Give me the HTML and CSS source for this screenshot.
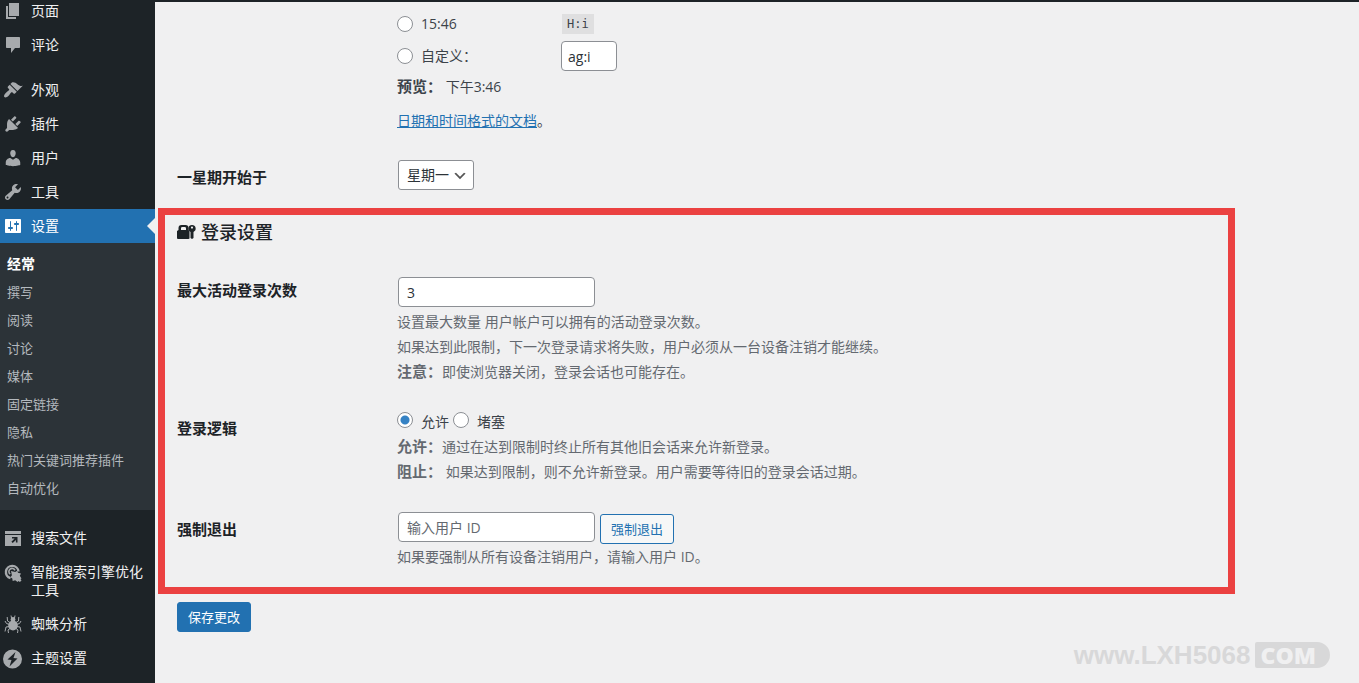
FILE: index.html
```html
<!DOCTYPE html>
<html lang="zh-CN">
<head>
<meta charset="utf-8">
<meta name="viewport" content="width=device-width, initial-scale=1">
<title>常规设置</title>
<link rel="stylesheet" href="styles.css">
</head>
<body>
<div class="layout">
  <nav class="sidebar">
    <ul class="menu">
      <li><a class="item item-first" href="#"><svg class="icon" viewBox="0 0 20 20"><path d="M6 15V2h10v13H6zm-1 1h8v2H3V5h2v11z"/></svg><span>页面</span></a></li>
      <li><a class="item" href="#"><svg class="icon" viewBox="0 0 20 20"><path d="M4 2h12c.6 0 1 .4 1 1v9c0 .6-.4 1-1 1h-4l-4 5v-5H4c-.6 0-1-.4-1-1V3c0-.6.4-1 1-1z"/></svg><span>评论</span></a></li>
    </ul>
    <ul class="menu">
      <li><a class="item" href="#"><svg class="icon" viewBox="0 0 20 20"><path d="M14.48 11.06L7.41 3.99l1.5-1.5c.5-.56 2.3-.47 3.51.32 1.21.8 1.43 1.28 2.91 2.1 1.18.64 2.45 1.26 4.45.85zm-.71.71L6.7 4.7 4.93 6.47c-.39.39-.39 1.02 0 1.41l1.06 1.06c.39.39.39 1.03 0 1.42-.6.6-1.43 1.11-2.21 1.69-.35.26-.7.53-1.01.84C1.43 14.23.4 16.08 1.4 17.07c.99 1 2.84-.03 4.18-1.36.31-.31.58-.66.85-1.02.57-.78 1.08-1.61 1.69-2.21.39-.39 1.02-.39 1.41 0l1.06 1.06c.39.39 1.02.39 1.41 0z"/></svg><span>外观</span></a></li>
      <li><a class="item" href="#"><svg class="icon" viewBox="0 0 20 20"><path d="M13.11 4.36L9.87 7.6 8 5.73l3.24-3.24c.35-.34 1.05-.2 1.56.32.52.51.66 1.21.31 1.55zm-8 1.77l.91-1.12 9.01 9.01-1.19.84c-.71.71-2.63 1.16-3.82 1.16H6.14L4.9 17.26c-.59.59-1.54.59-2.12 0-.59-.58-.59-1.53 0-2.12l1.24-1.24v-3.88c0-1.13.4-3.19 1.09-3.89zm7.26 3.97l3.24-3.24c.34-.35 1.04-.21 1.55.31.52.51.66 1.21.31 1.55l-3.24 3.25z"/></svg><span>插件</span></a></li>
      <li><a class="item" href="#"><svg class="icon" viewBox="0 0 20 20"><path d="M10 9.25c-2.27 0-2.73-3.44-2.73-3.44C7 4.02 7.82 2 9.97 2c2.16 0 2.98 2.02 2.71 3.81 0 0-.41 3.44-2.68 3.44zm0 2.57L12.72 10c2.39 0 4.52 2.33 4.52 4.53v2.49s-3.65 1.13-7.24 1.13c-3.65 0-7.24-1.13-7.24-1.13v-2.49c0-2.25 1.94-4.48 4.47-4.48z"/></svg><span>用户</span></a></li>
      <li><a class="item" href="#"><svg class="icon" viewBox="0 0 20 20"><path d="M16.68 9.77c-1.34 1.34-3.3 1.67-4.95.99l-5.41 6.52c-.99.99-2.59.99-3.58 0s-.99-2.59 0-3.57l6.52-5.42c-.68-1.65-.35-3.61.99-4.95 1.28-1.28 3.12-1.62 4.72-1.06l-2.89 2.89 2.82 2.82 2.86-2.87c.53 1.58.18 3.39-1.08 4.65zM3.81 16.21c.4.39 1.04.39 1.43 0 .4-.4.4-1.04 0-1.43-.39-.4-1.03-.4-1.43 0-.39.39-.39 1.03 0 1.43z"/></svg><span>工具</span></a></li>
      <li><a class="item item-current" href="#"><svg class="icon" viewBox="0 0 20 20"><path d="M18 16V4c0-.55-.45-1-1-1H3c-.55 0-1 .45-1 1v12c0 .55.45 1 1 1h14c.55 0 1-.45 1-1zM8 11h1c.55 0 1 .45 1 1s-.45 1-1 1H8v1.5c0 .28-.22.5-.5.5s-.5-.22-.5-.5V13H6c-.55 0-1-.45-1-1s.45-1 1-1h1V5.5c0-.28.22-.5.5-.5s.5.22.5.5V11zm5-2h-1c-.55 0-1-.45-1-1s.45-1 1-1h1V5.5c0-.28.22-.5.5-.5s.5.22.5.5V7h1c.55 0 1 .45 1 1s-.45 1-1 1h-1v5.5c0 .28-.22.5-.5.5s-.5-.22-.5-.5V9z"/></svg><span>设置</span></a>
        <ul class="submenu">
          <li><a class="sub sub-current" href="#">经常</a></li>
          <li><a class="sub" href="#">撰写</a></li>
          <li><a class="sub" href="#">阅读</a></li>
          <li><a class="sub" href="#">讨论</a></li>
          <li><a class="sub" href="#">媒体</a></li>
          <li><a class="sub" href="#">固定链接</a></li>
          <li><a class="sub" href="#">隐私</a></li>
          <li><a class="sub" href="#">热门关键词推荐插件</a></li>
          <li><a class="sub" href="#">自动优化</a></li>
        </ul>
      </li>
    </ul>
    <ul class="menu">
      <li><a class="item" href="#"><svg class="icon" viewBox="0 0 20 20"><path fill-rule="evenodd" d="M2 3h16v3H2zM2 7h16v11H2zM9 9v1.600h2.600L8.400 13.800l1.300 1.300 3.200-3.200v2.600h1.600V9z"/></svg><span>搜索文件</span></a></li>
      <li><a class="item" href="#"><svg class="icon icon-low" viewBox="0 0 20 20"><path class="ring" d="M15.500 8.500A6.300 6.300 0 1 0 7.500 15.200"/><path class="ring ring-inner" d="M12 7.300A3.200 3.200 0 1 0 7.200 11.200"/><path d="M8 8l4.200 1 2-1.200.8 2 3 .7-1.200 2.300 1.700 2.700-1 .6 1 1.400-1.600 1.600-1.500-1.200-.8 1.100-2.400-1.700-2.500.7-.4-2.600-1.800-1.200 1.400-2z"/></svg><span>智能搜索引擎优化工具</span></a></li>
      <li><a class="item" href="#"><svg class="icon" viewBox="0 0 20 20"><ellipse cx="10" cy="11.500" rx="4.800" ry="5"/><circle cx="10" cy="5.500" r="2.400"/><path class="stroke" d="M8.500 4L8 1.500M11.500 4l.5-2.500M7 8.500L4.500 7 4.200 3M13 8.500L15.500 7l.3-4M6.500 10.500L3.500 9.500 2 7M13.500 10.500l3-1L18 7M6.500 12.500L3 13 2 17.500M13.500 12.500l3.500.500 1 4.500M7 14.500L5 16l.5 3M13 14.500l2 1.500-.5 3"/></svg><span>蜘蛛分析</span></a></li>
      <li><a class="item" href="#"><svg class="icon icon-low" viewBox="0 0 20 20"><path fill-rule="evenodd" d="M9.500.5a9.500 9.500 0 1 1 0 19 9.500 9.500 0 0 1 0-19zM12.500 3L4.500 10.500l4 .5L6.500 17.500 14.500 9.500l-4-.5z"/></svg><span>主题设置</span></a></li>
    </ul>
  </nav>

  <main class="content">
    <form>
      <div class="row row-time">
        <div class="label"></div>
        <div class="field">
          <div class="option">
            <label class="choice choice-wide"><input type="radio" name="time">15:46</label>
            <code>H:i</code>
          </div>
          <div class="option">
            <label class="choice choice-wide"><input type="radio" name="time">自定义：</label>
            <input class="text text-small" type="text" value="ag:i" aria-label="自定义时间格式">
          </div>
          <p class="preview"><strong>预览：</strong> 下午3:46</p>
          <p class="docs"><a href="#">日期和时间格式的文档</a>。</p>
        </div>
      </div>
      <div class="row row-week">
        <label class="label label-week" for="week">一星期开始于</label>
        <div class="field">
          <div class="select">
            <select id="week"><option>星期一</option></select>
            <svg viewBox="0 0 20 20"><path d="M5 6l5 5 5-5 2 1-7 7-7-7z"/></svg>
          </div>
        </div>
      </div>

      <section class="login">
        <h2><svg viewBox="0 0 20 20"><path fill-rule="evenodd" d="M0 9l1.500-1V6a3 3 0 0 1 3-3h4a3 3 0 0 1 3 3v2l1 1v7.500l-1 .5H1l-1-.5zM4 8h5V6.300A1.300 1.300 0 0 0 7.700 5H5.300A1.300 1.300 0 0 0 4 6.300z"/><path fill-rule="evenodd" d="M15 3a3.600 3.600 0 0 1 1.500 6.900V16L15 17l-1.500-1V9.900A3.600 3.600 0 0 1 15 3zM15 4.500a1.100 1.100 0 1 0 0 2.200 1.100 1.100 0 0 0 0-2.200z"/></svg>登录设置</h2>
        <div class="row">
          <label class="label label-max" for="max">最大活动登录次数</label>
          <div class="field">
            <input class="text" id="max" type="text" value="3">
            <p class="desc desc-max">设置最大数量 用户帐户可以拥有的活动登录次数。<br>如果达到此限制，下一次登录请求将失败，用户必须从一台设备注销才能继续。<br><strong>注意：</strong>即使浏览器关闭，登录会话也可能存在。</p>
          </div>
        </div>
        <div class="row row-logic">
          <div class="label label-logic">登录逻辑</div>
          <div class="field">
            <div class="choices">
              <label class="choice"><input type="radio" name="logic" checked><span>允许</span></label>
              <label class="choice"><input type="radio" name="logic"><span>堵塞</span></label>
            </div>
            <p class="desc"><strong>允许：</strong>通过在达到限制时终止所有其他旧会话来允许新登录。<br><strong>阻止：</strong> 如果达到限制，则不允许新登录。用户需要等待旧的登录会话过期。</p>
          </div>
        </div>
        <div class="row row-force">
          <label class="label label-force" for="uid">强制退出</label>
          <div class="field">
            <div class="inline">
              <input class="text" id="uid" type="text" placeholder="输入用户 ID">
              <button class="button" type="button">强制退出</button>
            </div>
            <p class="desc">如果要强制从所有设备注销用户，请输入用户 ID。</p>
          </div>
        </div>
      </section>
      <button class="button button-primary" type="submit">保存更改</button>
    </form>
  </main>
</div>
<div class="watermark"><span>www.LXH5068</span><span class="mark-com">COM</span></div>
</body>
</html>
```
FILE: styles.css
```css
* { box-sizing: border-box; }

body {
  margin: 0;
  height: 100vh;
  overflow: hidden;
  position: relative;
  background: #f0f0f1;
  color: #3c434a;
  font: 14px/20px "Open Sans", "Noto Sans CJK SC", sans-serif;
}

ul, p, h2 { margin: 0; padding: 0; }
ul { list-style: none; }
strong { font-size: 15px; }

.layout { display: flex; min-height: 100vh; }

/* Sidebar */
.sidebar {
  width: 155px;
  flex: none;
  display: flex;
  flex-direction: column;
  gap: 11px;
  background: #1d2327;
}

.item {
  display: flex;
  gap: 8px;
  padding: 8px 8px 8px 3px;
  position: relative;
  color: #f0f0f1;
  line-height: 18px;
  text-decoration: none;
}
.item-first { padding-top: 2px; }

.icon {
  width: 20px;
  height: 20px;
  flex: none;
  margin: -1px 0;
  fill: #a7aaad;
}
.icon-low { margin: 0 0 -2px; }
.icon .stroke { fill: none; stroke: #a7aaad; stroke-width: 1; }
.icon .ring { fill: none; stroke: #a7aaad; stroke-width: 2.4; }
.icon .ring-inner { stroke-width: 1.6; }

.item-current { background: #2271b1; color: #fff; }
.item-current .icon { fill: #fff; }
.item-current::after {
  content: "";
  position: absolute;
  right: 0;
  top: 9px;
  border: 8px solid transparent;
  border-left: 0;
  border-right-color: #f0f0f1;
}

.submenu { padding: 7px 0 8px; background: #2c3338; }
.sub {
  display: block;
  padding: 0 7px;
  color: #b4b9be;
  font-size: 13px;
  line-height: 28px;
  text-decoration: none;
}
.sub-current { color: #fff; font-size: 14px; font-weight: 700; }

/* Settings form */
.content {
  flex: 1;
  min-width: 0;
  border-top: 2px solid #1d2327;
}

.row { display: grid; grid-template-columns: 220px 1fr; }
.row-time, .row-week { margin-left: 22px; }
.row-time { padding-top: 6px; }
.row-week { padding-top: 29px; }

.label { color: #1d2327; font-size: 15px; font-weight: 700; }
.label-week, .label-force { padding-top: 7px; }
.label-max { padding-top: 3px; }
.label-logic { padding-top: 10px; }

.option { display: flex; align-items: center; height: 32px; }
.choice { display: flex; align-items: center; gap: 8px; }
.choice-wide { width: 164px; }

input[type="radio"] {
  appearance: none;
  width: 16px;
  height: 16px;
  flex: none;
  margin: 0;
  border: 1px solid #8c8f94;
  border-radius: 50%;
  background: #fff;
}
input[type="radio"]:checked {
  background: radial-gradient(circle, #3582c4 4px, #fff 5px);
}

code {
  padding: 0 5px;
  margin-left: 1px;
  background: #dfdfe0;
  font: 12px/20px "DejaVu Sans Mono", monospace;
}

.text {
  display: block;
  width: 197px;
  height: 30px;
  margin: 0 1px;
  padding: 0 8px;
  border: 1px solid #8c8f94;
  border-radius: 4px;
  background: #fff;
  color: #2c3338;
  font: inherit;
}
.text::placeholder { color: #646970; opacity: 1; }
.text-small { width: 56px; margin: 0; padding: 0 6px; }

.preview { padding-top: 4px; }
.docs { padding-top: 14px; }
a { color: #2271b1; }

.select { display: inline-block; position: relative; margin-left: 1px; }
.select select {
  display: block;
  width: 76px;
  height: 30px;
  padding: 0 8px;
  appearance: none;
  border: 1px solid #8c8f94;
  border-radius: 3px;
  background: #fff;
  color: #2c3338;
  font: inherit;
}
.select svg {
  position: absolute;
  right: 6px;
  top: 8px;
  width: 16px;
  height: 16px;
  fill: #555;
  pointer-events: none;
}

/* Highlighted login section */
.login {
  margin: 18px 124px 8px 3px;
  padding: 5px 12px 18px;
  border: 7px solid #eb4141;
}
.login h2 {
  display: flex;
  align-items: center;
  gap: 4px;
  margin-bottom: 33px;
  color: #1d2327;
  font-size: 18px;
  font-weight: 500;
  line-height: 24px;
}
.login h2 svg { width: 20px; height: 20px; fill: #1d2327; }

.row-logic { padding-top: 24px; }
.row-force { padding-top: 28px; }
.choices { display: flex; gap: 4px; height: 26px; padding-bottom: 2px; }
.choices span { padding-top: 4px; }

.desc { color: #646970; line-height: 25px; }
.desc-max { padding-top: 2px; }

.inline { display: flex; gap: 4px; align-items: flex-start; }
.button {
  height: 30px;
  padding: 0 10px;
  border: 1px solid #2271b1;
  border-radius: 3px;
  background: #f6f7f7;
  color: #2271b1;
  font: 13px/28px "Open Sans", "Noto Sans CJK SC", sans-serif;
}
.inline .button { margin-top: 2px; }
.button-primary { margin-left: 22px; background: #2271b1; color: #fff; }

/* Site mark */
.watermark {
  position: absolute;
  right: 29px;
  bottom: 15px;
  display: flex;
  align-items: center;
  height: 26px;
  color: #d8d8d9;
  font: 700 26px/26px "Liberation Sans Narrow", "Liberation Sans", sans-serif;
}
.mark-com {
  margin-left: 4px;
  padding: 0 14px 0 6px;
  border-radius: 2px 13px 13px 2px;
  background: #d8d8d9;
  color: #f0f0f1;
  font: 800 23px/26px "Open Sans", sans-serif;
}
```
